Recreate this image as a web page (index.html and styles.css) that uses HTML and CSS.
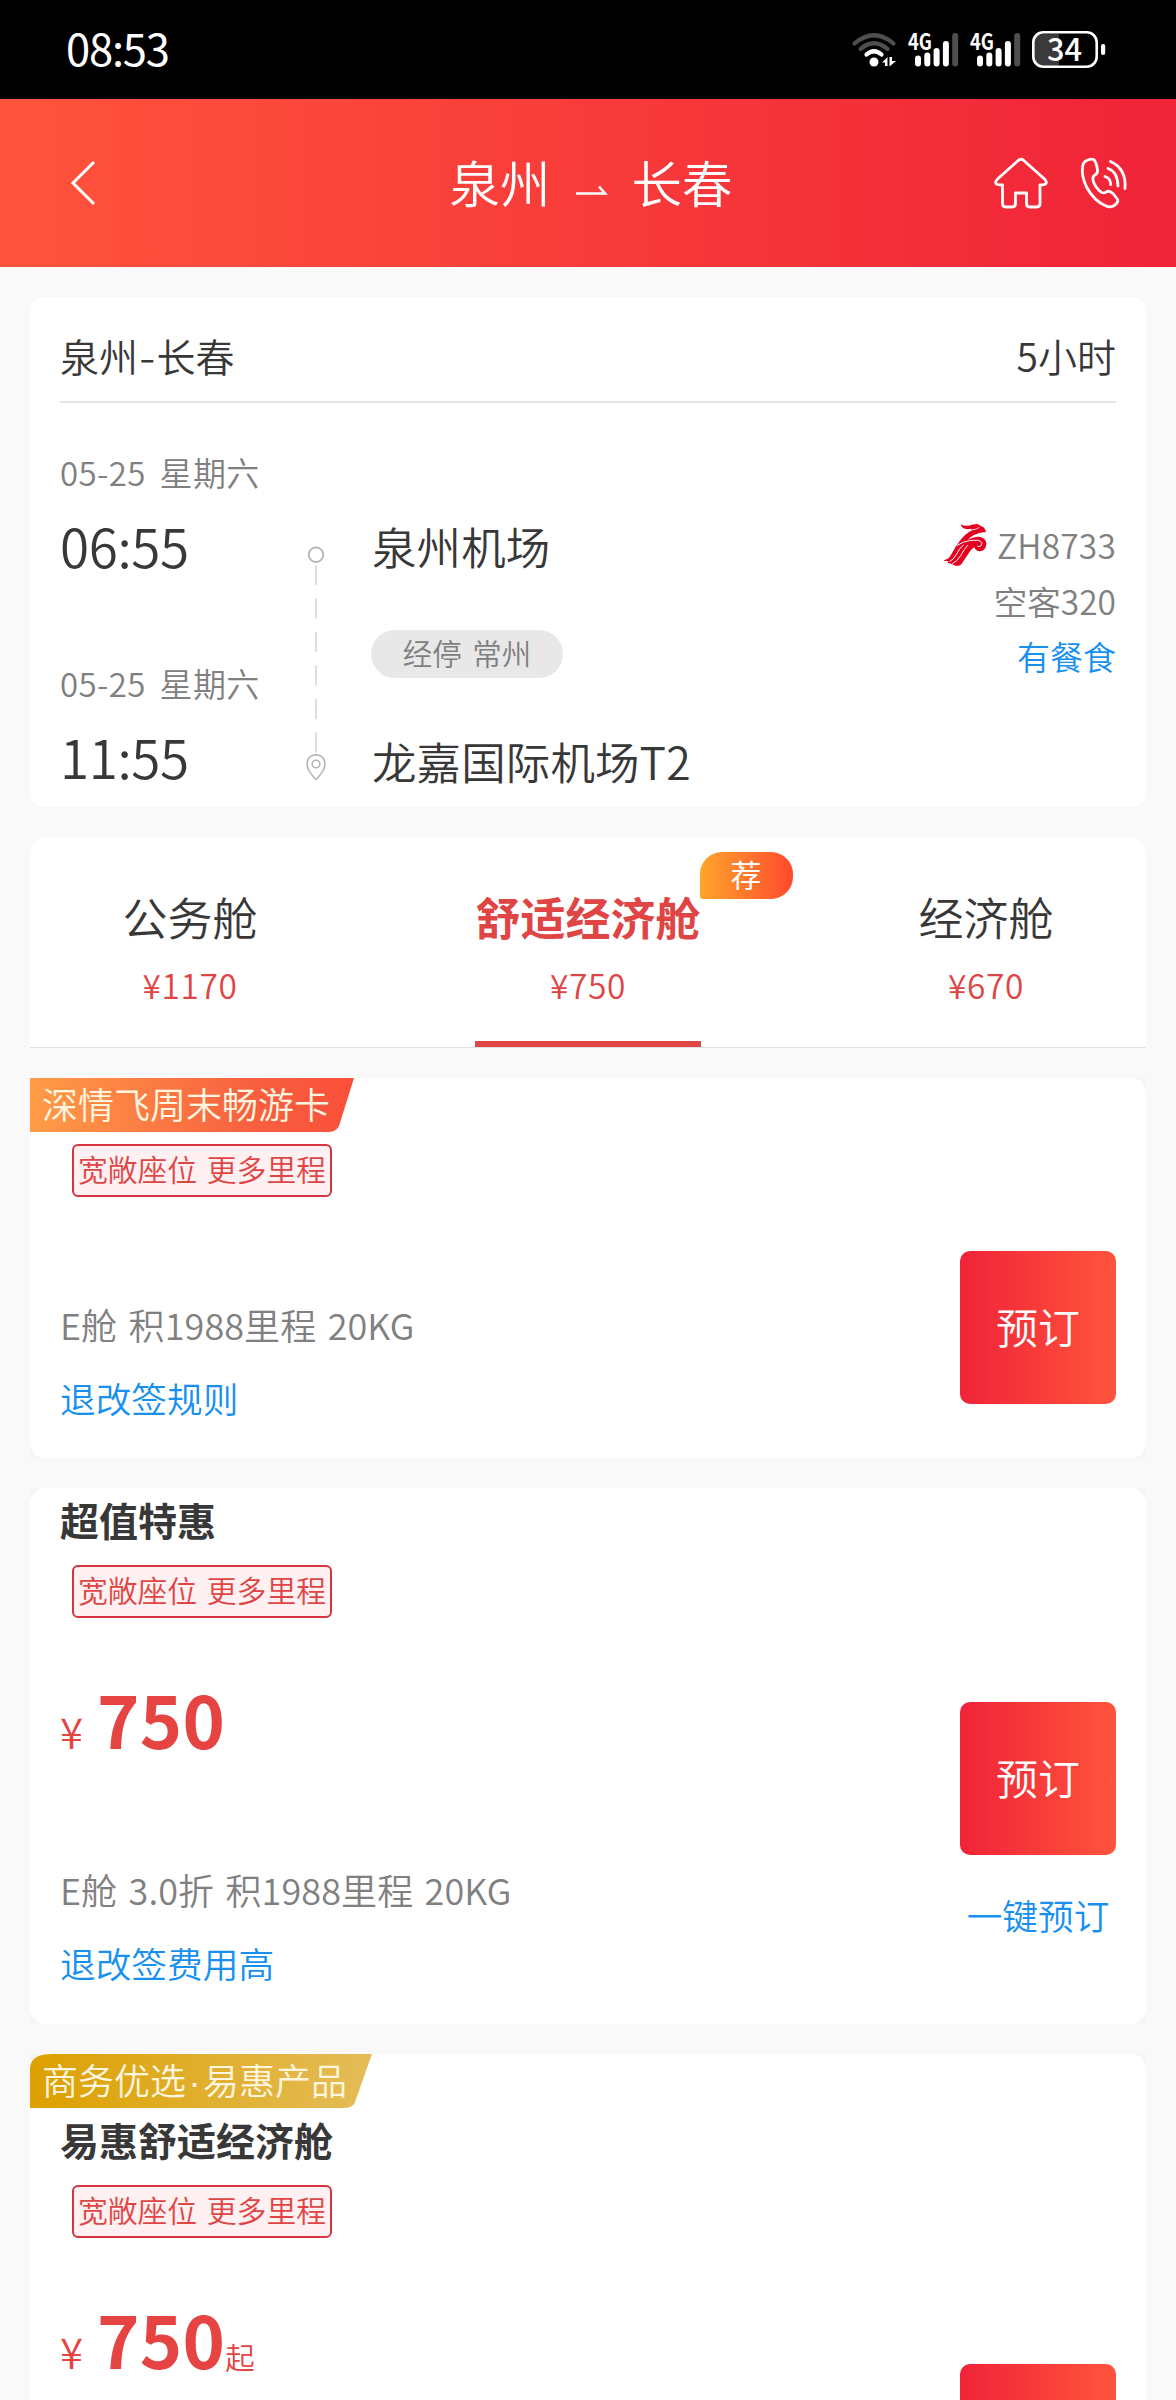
FILE: index.html
```html
<!DOCTYPE html>
<html lang="zh-CN">
<head>
<meta charset="utf-8">
<title>泉州 - 长春</title>
<link rel="stylesheet" href="styles.css">
</head>
<body>
<div class="status">
  <span class="clock">08:53</span>
  <svg class="status-icons" width="256" height="44" viewBox="850 28 256 44">
    <g fill="none" stroke-linecap="round" stroke-width="4.2">
      <path d="M854.500 43.500Q874 27 893.500 43.500" stroke="#4f4f4f"/>
      <path d="M860.500 49Q874 37.500 887.500 49" stroke="#4f4f4f"/>
      <path d="M866.500 54.500Q874 48 881.500 54.500" stroke="#fff"/>
    </g>
    <circle cx="874" cy="62" r="4.500" fill="#fff"/>
    <path d="M882 62.500L887.500 57V66H885V62.500ZM889.500 57H892V61H896L889.500 66.500Z" fill="#fff"/>
    <g id="signal">
      <text class="net" x="908" y="49.500" textLength="24" lengthAdjust="spacingAndGlyphs">4G</text>
      <g stroke="#fff" stroke-width="6" stroke-linecap="round">
        <path d="M918 58.500V63.500M927.300 55.500V63.500M936.600 51V63.500M945.900 44V63.500"/>
        <path d="M955.200 36V63.500" stroke="#4f4f4f"/>
      </g>
    </g>
    <use href="#signal" x="62"/>
    <path d="M1043 34H1059V66H1043Q1034 66 1034 57V43Q1034 34 1043 34Z" fill="#3a3a3a"/>
    <rect x="1033.300" y="32.300" width="63.400" height="34.400" rx="10" fill="none" stroke="#fff" stroke-width="2.600"/>
    <rect x="1101" y="44" width="4.200" height="11" rx="2" fill="#fff"/>
    <text class="level" x="1047" y="60.500" textLength="35" lengthAdjust="spacingAndGlyphs">34</text>
  </svg>
</div>

<header class="header">
  <svg class="back" width="28" height="48" viewBox="0 0 28 48"><path d="M25 3L4 24L25 45" fill="none" stroke="#fff" stroke-width="3"/></svg>
  <h1 class="route">
    <span>泉州</span>
    <svg width="32" height="14" viewBox="0 0 32 14"><path d="M0 10.500H29L23 3.500" fill="none" stroke="#fff" stroke-width="2.600"/></svg>
    <span>长春</span>
  </h1>
  <div class="actions">
    <svg width="54" height="54" viewBox="0 0 54 54" fill="none" stroke="#fff" stroke-width="2.800" stroke-linejoin="round"><path d="M24.500 4.200Q27 2.300 29.500 4.200L51 23.500Q53.300 26.500 51.500 28Q50.500 29 46 29V47.500Q46 51 42.500 51H36Q32.500 51 32.500 47.500V37H21.500V47.500Q21.500 51 18 51H12Q8.500 51 8.500 47.500V29Q3.500 29 2.500 28Q.7 26.500 3 23.500Z"/></svg>
    <svg width="48" height="54" viewBox="0 0 48 54" fill="none" stroke="#fff" stroke-width="2.800" stroke-linecap="round" stroke-linejoin="round"><path d="M5 5.500Q9.500 2.200 13.500 3.500Q16 5 17.500 13.500Q18 17.500 15 19Q12.500 20 13 24Q14.500 31 21.500 36.500Q25 37.500 27 35.500Q29.500 34.500 33 37.500L37 42.500Q38.800 45 36.500 47.500Q32 52.500 26 50Q14 45 6.500 31Q1 19 2.700 10Q3.300 7 5 5.500Z"/><path d="M25 20.500Q30.500 22 30.700 28.500M28 12.500Q37.500 15.500 38 30M30.500 5.500Q46.500 12.500 45 32.500"/></svg>
  </div>
</header>

<main class="page">
  <section class="card flight">
    <div class="flight-head"><span>泉州<i class="dash">-</i>长春</span><span>5小时</span></div>
    <div class="flight-body">
      <div class="times">
        <p class="date">05-25 星期六</p>
        <p class="time">06:55</p>
        <p class="date second">05-25 星期六</p>
        <p class="time">11:55</p>
      </div>
      <svg class="track" width="24" height="240" viewBox="304 544 24 240" fill="none">
        <circle cx="316" cy="554.700" r="7.300" stroke="#b5b5b5" stroke-width="1.800"/>
        <path d="M316 565V752.500" stroke="#dcdcdc" stroke-width="1.800" stroke-dasharray="20 13.500"/>
        <path d="M316 779.500Q307 770.500 307 764Q307.500 755 316 754.700Q324.500 755 325 764Q325 770.500 316 779.500Z" stroke="#b5b5b5" stroke-width="1.600"/>
        <circle cx="316" cy="764" r="3.800" stroke="#b5b5b5" stroke-width="1.600"/>
      </svg>
      <div class="places">
        <p class="airport">泉州机场</p>
        <p class="stop">经停 常州</p>
        <p class="airport">龙嘉国际机场T2</p>
      </div>
      <div class="plane">
        <p class="number">
          <svg width="44" height="44" viewBox="36 39 132 132"><g fill="#e60020"><path d="M89 43Q99 49 112 47Q126 43 138 42Q145 43 149 48Q161 50 165 66Q146 66 129 75Q116 82 109 91Q131 78 148 81Q167 86 166 103Q164 123 147 124Q132 123 131 112Q122 116 116 125L91 163Q82 171 70 166L60 161L50 158L52 153L38 153Q40 148 49 147Q56 143 62 131Q75 108 84 96Q101 72 123 61L119 56Q104 60 95 53Q90 49 89 43Z"/></g><g fill="none" stroke="#fff" stroke-width="3"><path d="M78 106Q98 94 116 92Q140 89 149 94Q157 101 149 108Q144 112 139 108"/><path d="M98 105Q86 112 77 132Q66 151 55 155M111 105Q100 116 89 137Q77 156 64 161"/><path d="M121 60Q136 59 145 52" stroke-width="2.500"/></g></svg>
          <span>ZH8733</span>
        </p>
        <p>空客320</p>
        <p class="meal">有餐食</p>
      </div>
    </div>
  </section>

  <nav class="tabs">
    <div class="tab"><span class="name">公务舱</span><span class="fare">¥1170</span></div>
    <div class="tab active"><span class="name">舒适经济舱</span><span class="fare">¥750</span><span class="badge">荐</span></div>
    <div class="tab"><span class="name">经济舱</span><span class="fare">¥670</span></div>
  </nav>

  <div class="corner">
  <section class="card product square">
    <div class="ribbon">
      <svg width="324" height="54" viewBox="0 0 324 54"><defs><linearGradient id="orange"><stop stop-color="#ff9c47"/><stop offset=".7" stop-color="#f85f3f"/><stop offset="1" stop-color="#fa4f3a"/></linearGradient></defs><path d="M0 0H324L309 48Q306 54 298 54H0Z" fill="url(#orange)"/></svg>
      <span>深情飞周末畅游卡</span>
    </div>
    <p class="chip">宽敞座位 更多里程</p>
    <div class="row">
      <div class="info">
        <p class="detail">E舱 积1988里程 20KG</p>
        <p class="link">退改签规则</p>
      </div>
      <div class="buy"><button class="book">预订</button></div>
    </div>
  </section>
  </div>

  <div class="corner">
  <section class="card product">
    <h2 class="title">超值特惠</h2>
    <p class="chip">宽敞座位 更多里程</p>
    <div class="row">
      <div class="info">
        <p class="price"><span class="yen">¥</span><b>750</b></p>
        <p class="detail">E舱 3.0折 积1988里程 20KG</p>
        <p class="link">退改签费用高</p>
      </div>
      <div class="buy"><button class="book">预订</button><span class="quick">一键预订</span></div>
    </div>
  </section>
  </div>

  <div class="corner">
  <section class="card product last">
    <div class="ribbon gold">
      <svg width="342" height="54" viewBox="0 0 342 54"><defs><linearGradient id="gold"><stop stop-color="#dca000"/><stop offset="1" stop-color="#e4bd58"/></linearGradient></defs><path d="M0 9Q5 0 22 0H342L325 48Q323 54 313 54H0Z" fill="url(#gold)"/></svg>
      <span>商务优选<i class="dot">·</i>易惠产品</span>
    </div>
    <h2 class="title">易惠舒适经济舱</h2>
    <p class="chip">宽敞座位 更多里程</p>
    <div class="row">
      <div class="info">
        <p class="price"><span class="yen">¥</span><b>750</b><span class="from">起</span></p>
      </div>
      <div class="buy"><button class="book"></button></div>
    </div>
  </section>
  </div>
</main>
</body>
</html>
```
FILE: styles.css
```css
* { box-sizing: border-box; }

body {
  margin: 0;
  width: 1176px;
  height: 2400px;
  overflow: hidden;
  background: #f9f9f9;
  color: #383838;
  font-family: "Noto Sans CJK SC", "Noto Sans", sans-serif;
  font-weight: 350;
}

p, h1, h2 { margin: 0; font-weight: inherit; }
i { font-style: normal; }
svg { display: block; flex: none; overflow: visible; }

.status {
  height: 99px;
  padding: 0 70px 0 66px;
  display: flex;
  align-items: center;
  justify-content: space-between;
  background: #000;
  color: #fff;
}
.clock { font-size: 43.5px; line-height: 60px; letter-spacing: -1.2px; font-weight: 400; margin-top: -3px; }
.net { font-size: 22px; font-weight: 700; fill: #fff; }
.level { font-size: 31px; font-weight: 500; fill: #fff; }

.header {
  height: 168px;
  padding: 0 48px 0 69px;
  display: grid;
  grid-template-columns: 1fr auto 1fr;
  align-items: center;
  background: linear-gradient(90deg, #ff543c, #f02338);
  color: #fff;
}
.route { display: flex; align-items: center; font-size: 50.5px; line-height: 72px; margin: -5px 0 0 -15px; }
.route svg { margin: 19px 24px 0 25px; }
.actions { display: flex; justify-content: flex-end; gap: 32px; }

.page { padding: 30px 30px 0; }
.card { background: #fff; border-radius: 15px; }

.flight { height: 510px; padding: 0 30px; margin-bottom: 30px; }
.flight-head {
  height: 106px;
  padding-top: 29px;
  display: flex;
  justify-content: space-between;
  border-bottom: 2px solid #e4e4e4;
  font-size: 39px;
  line-height: 58px;
}
.dash { display: inline-block; width: 18.5px; text-align: center; transform: scaleX(1.2); }
.flight-body { display: flex; padding-top: 44px; }
.times { width: 246px; }
.date { font-size: 33px; line-height: 50px; letter-spacing: .4px; word-spacing: 6px; color: #808080; white-space: nowrap; }
.date.second { margin-top: 75px; }
.time { font-size: 53px; line-height: 75px; letter-spacing: -.4px; padding-top: 11px; }
.track { margin: 97px 44px 0 -2px; }
.places { flex: 1; padding-top: 66px; }
.airport { font-size: 44.5px; line-height: 66px; letter-spacing: .1px; }
.stop {
  width: 192px;
  height: 48px;
  margin: 51px 0 50px -1px;
  border-radius: 24px;
  background: #e8e8e8;
  color: #808080;
  font-size: 29.5px;
  line-height: 44px;
  text-align: center;
  word-spacing: 4px;
}
.plane { padding-top: 70px; text-align: right; color: #808080; font-size: 33.5px; line-height: 56px; }
.number { display: flex; align-items: center; justify-content: flex-end; gap: 10px; letter-spacing: .2px; }
.meal, .link, .quick { color: #1890f0; }
.meal { font-size: 33px; line-height: 54px; }

.tabs {
  height: 211px;
  margin-bottom: 30px;
  padding: 0 92.5px;
  display: flex;
  justify-content: space-between;
  background: #fff;
  border-radius: 15px 15px 0 0;
  border-bottom: 1px solid #e0e0e0;
}
.tab { position: relative; display: flex; flex-direction: column; align-items: center; padding-top: 47px; height: 210px; }
.name { font-size: 45px; line-height: 66px; }
.fare { font-size: 33.5px; line-height: 50px; margin-top: 10px; letter-spacing: .6px; color: #e04545; }
.active { border-bottom: 6px solid #de4545; }
.active .name { font-weight: 700; color: #e04545; }
.badge {
  position: absolute;
  left: calc(100% - 1px);
  top: 15px;
  width: 93px;
  height: 47px;
  border-radius: 22px 22px 22px 3px;
  background: linear-gradient(90deg, #ffa52b, #ff4a2d);
  color: #fff;
  font-size: 31px;
  font-weight: 400;
  line-height: 43px;
  text-align: center;
}

.corner { background: #f5f5f5; margin-bottom: 30px; }
.corner:last-child { margin: 0; }
.square { border-top-left-radius: 0; }
.ribbon { display: grid; color: #fff6e0; font-size: 36px; line-height: 50px; }
.ribbon > * { grid-area: 1 / 1; }
.ribbon span { padding-left: 12px; }
.dot { display: inline-block; width: 17px; text-align: center; font-family: "Liberation Sans", sans-serif; line-height: 1; }
.title { height: 65px; padding-left: 30px; font-size: 39px; line-height: 62px; font-weight: 700; }
.chip {
  width: 260px;
  height: 53px;
  margin: 12px 0 0 42px;
  border: 2px solid #d43540;
  border-radius: 6px;
  background: #fff0f1;
  color: #e04545;
  font-size: 29.8px;
  line-height: 45px;
  text-align: center;
  word-spacing: 3px;
  white-space: nowrap;
}
.row { display: flex; justify-content: space-between; align-items: center; padding: 0 30px; }
.info { padding: 33px 0 25px; align-self: flex-start; }
.square .info { padding-bottom: 24px; }
.price { height: 144px; display: flex; align-items: baseline; color: #e64343; line-height: 134px; }
.price b { font-size: 72px; font-weight: 700; letter-spacing: .3px; }
.yen { width: 37px; font-size: 42px; }
.from { font-size: 29.5px; }
.detail { margin-top: 58px; font-size: 36px; line-height: 73px; letter-spacing: .1px; word-spacing: 3.2px; color: #808080; }
.link { font-size: 35.7px; line-height: 73px; }
.buy { display: flex; flex-direction: column; align-items: center; }
.book {
  width: 156px;
  height: 153px;
  padding: 0 0 4px;
  border: 0;
  border-radius: 10px;
  background: linear-gradient(90deg, #f02338, #ff543c);
  color: #fff;
  font: inherit;
  font-size: 42px;
}
.quick { margin-top: 34px; font-size: 35.7px; line-height: 51px; }

/* the last card runs on below the fold */
.last { height: 346px; overflow: hidden; border-radius: 15px 15px 0 0; }
.last .row { height: 405px; }
```
